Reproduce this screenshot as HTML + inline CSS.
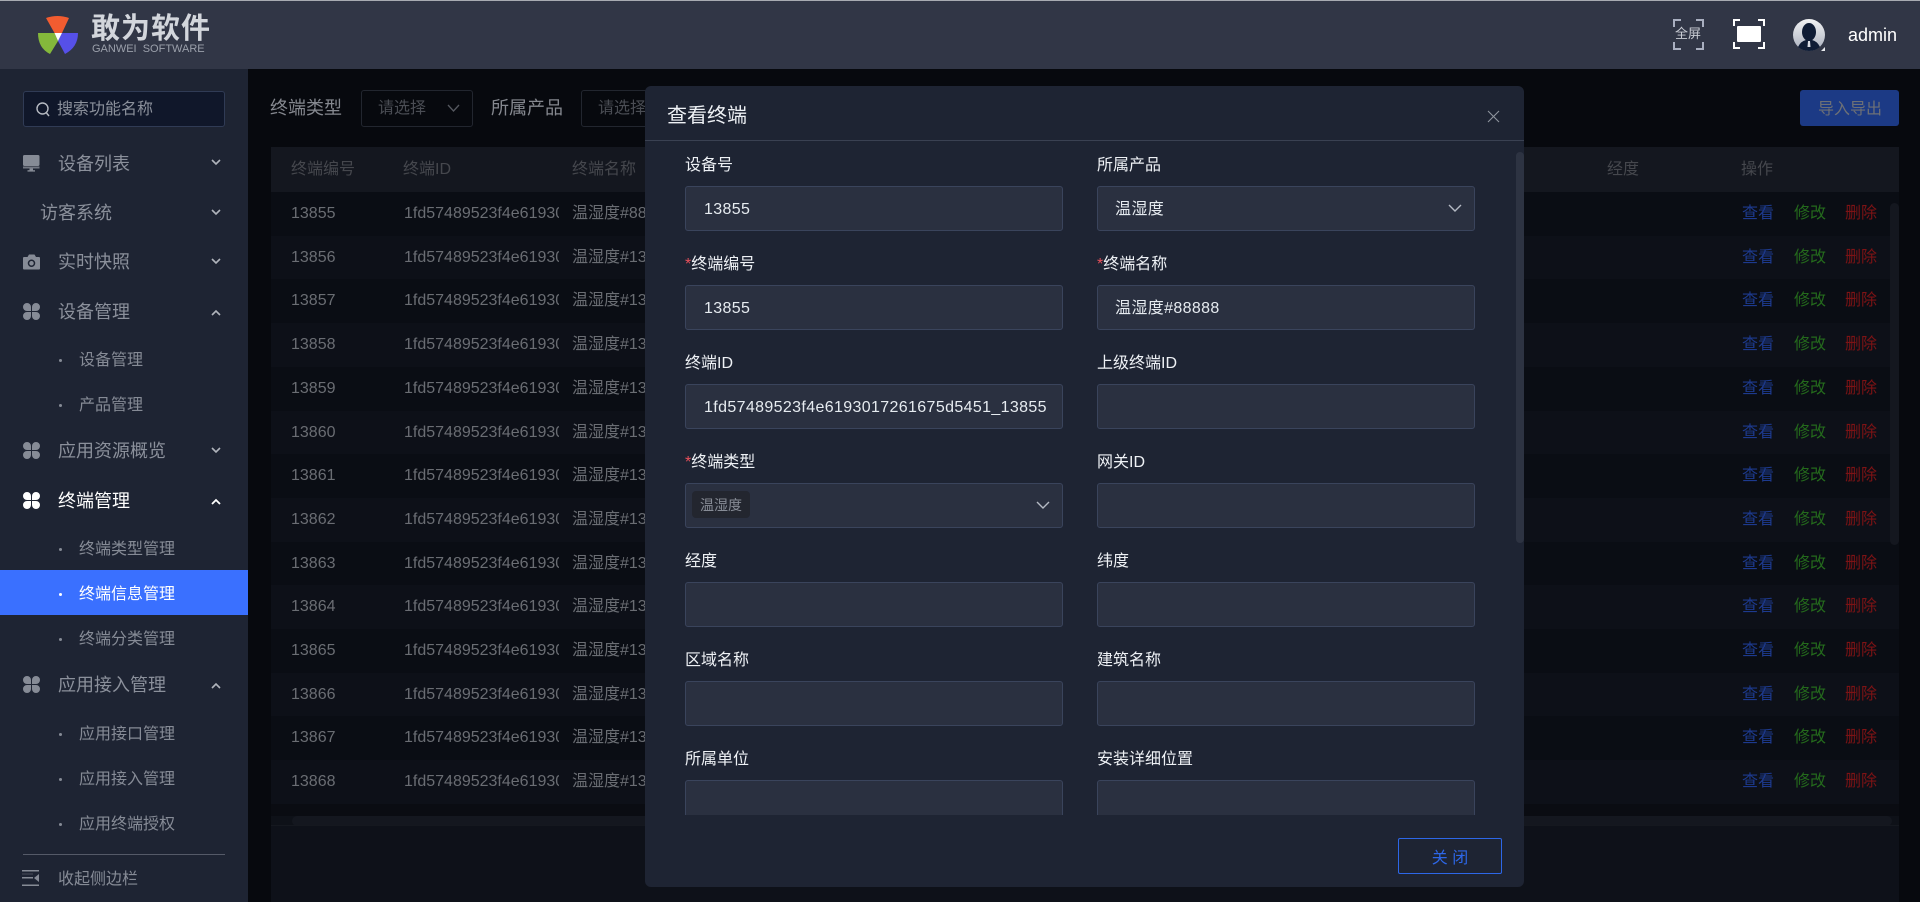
<!DOCTYPE html>
<html lang="zh-CN">
<head>
<meta charset="utf-8">
<title>查看终端</title>
<style>
html,body{margin:0;padding:0;background:#07090e;}
body{width:1920px;height:902px;position:relative;overflow:hidden;font-family:"Liberation Sans","Noto Sans CJK SC",sans-serif;font-size:16px;}
div,span,svg{position:absolute;box-sizing:border-box;}
.t{white-space:nowrap;line-height:24px;height:24px;}
.m{left:58px;font-size:18px;color:#8b909b;}
.s{left:79px;font-size:16px;color:#868b96;}
.d{left:59px;width:3px;height:3px;border-radius:50%;background:#868b96;}
.c{left:211px;}
.row{left:271px;width:1628px;height:44px;}
.row span{top:10px;white-space:nowrap;line-height:24px;color:#6a6d73;}
.a{left:20px}.b{left:133px;width:155px;overflow:hidden}.n{left:301px}
.v{left:1471px;color:#1d3a8e!important}.x{left:1523px;color:#246a1c!important}.z{left:1574px;color:#7d1315!important}
.o{background:#0a0d14}.e{background:#0d1018}
.l{font-size:16px;color:#eef1f5;white-space:nowrap;line-height:24px;height:24px;}
.l i{font-style:normal;color:#e8505b;}
.i{width:378px;height:45px;background:#2a3040;border:1px solid #3a445c;border-radius:3px;color:#e6ebf0;font-size:16px;line-height:45px;padding-left:18px;white-space:nowrap;overflow:hidden;letter-spacing:.36px;}
.c1{left:40px}.c2{left:452px}.i.c2{padding-left:17px}
</style>
</head>
<body>
<!-- header -->
<div style="left:0;top:0;width:1920px;height:69px;background:#313646;"></div>
<div style="left:0;top:0;width:1920px;height:1px;background:#a8abb2;"></div>
<svg style="left:36px;top:14px" width="44" height="42" viewBox="36 14 44 42">
<path d="M46 18Q57.500 14 69 18L62 33H54.500Z" fill="#f25c30"/>
<path d="M38 33H54.500L58 41L50 54Q38 48 38 33Z" fill="#84b83b"/>
<path d="M78 33H62L58 41L65 54Q78 47 78 33Z" fill="#5650e8"/>
<path d="M54.500 33H62L58 41Z" fill="#fff"/>
</svg>
<div class="t" style="left:91px;top:11px;font-size:29px;line-height:36px;height:36px;font-weight:700;color:#d3d6dc;letter-spacing:1px;">敢为软件</div>
<div class="t" style="left:92px;top:42px;font-size:11px;line-height:14px;height:14px;color:#9ba0ab;white-space:pre;">GANWEI  SOFTWARE</div>

<svg style="left:1673px;top:19px" width="31" height="31" viewBox="0 0 31 31" fill="none" stroke="#a9afc0" stroke-width="2"><path d="M1 8V1H8M23 1H30V8M1 23V30H8M23 30H30V23"/></svg>
<div class="t" style="left:1675px;top:22px;font-size:13px;color:#c9ccd4;">全屏</div>
<svg style="left:1733px;top:19px" width="32" height="30" viewBox="0 0 32 30" fill="none" stroke="#fff" stroke-width="2"><path d="M1 7V1H7M25 1H31V7M1 23V29H7M25 29H31V23"/><rect x="4" y="7" width="24" height="16" rx="1" fill="#fff" stroke="none"/></svg>
<svg style="left:1793px;top:19px" width="32" height="33" viewBox="0 0 32 33">
<defs><linearGradient id="av" x1="0" y1="0" x2="0" y2="1"><stop offset="0" stop-color="#f1f2f4"/><stop offset="1" stop-color="#a9afbd"/></linearGradient></defs>
<circle cx="16" cy="16" r="16" fill="url(#av)"/>
<ellipse cx="16" cy="13" rx="7" ry="9" fill="#0f1c35"/>
<path d="M5 28Q8 22 13 21H19Q24 22 27 28Q22 32 16 32Q10 32 5 28Z" fill="#0f1c35"/>
<path d="M15 22H17L17.500 28H14.500Z" fill="#d8dbe2"/>
<path d="M28 32L32 28V32Z" fill="#e8eaee"/>
</svg>
<div class="t" style="left:1848px;top:23px;font-size:18px;color:#fff;">admin</div>

<!-- sidebar -->
<div style="left:0;top:69px;width:248px;height:833px;background:#1e2433;"></div>
<div style="left:23px;top:91px;width:202px;height:36px;background:#10172a;border:1px solid #303b55;border-radius:3px;"></div>
<svg style="left:35px;top:101px" width="16" height="17" viewBox="0 0 16 17" fill="none" stroke="#b6bac2" stroke-width="1.400"><circle cx="7.500" cy="7.500" r="5.500"/><path d="M11.500 12L14 15"/></svg>
<div class="t" style="left:57px;top:98px;font-size:16px;color:#8b909b;">搜索功能名称</div>

<svg style="left:23px;top:155px" width="17" height="17" viewBox="0 0 17 17" fill="#868b96"><rect x="0" y="0" width="16.500" height="11" rx="1.500"/><rect x="0" y="11.500" width="16.500" height="2" opacity=".8"/><rect x="6.500" y="13.500" width="3.500" height="2"/><rect x="4.500" y="15.200" width="7.500" height="1.400"/></svg>
<div class="t m" style="top:152px;">设备列表</div>
<div class="t m" style="top:201px;left:40px;">访客系统</div>
<svg style="left:23px;top:254px" width="17" height="16" viewBox="0 0 17 16"><path fill="#868b96" fill-rule="evenodd" d="M1 3H4.500L6 .5H11.500L13 3H16A1 1 0 0 1 17 4V14.500A1 1 0 0 1 16 15.500H1A1 1 0 0 1 0 14.500V4A1 1 0 0 1 1 3ZM8.500 5.500A3.700 3.700 0 1 0 8.500 13A3.700 3.700 0 0 0 8.500 5.500ZM8.500 7A2.200 2.200 0 1 1 8.500 11.500A2.200 2.200 0 0 1 8.500 7Z"/></svg>
<div class="t m" style="top:250px;">实时快照</div>
<svg style="left:23px;top:303px" width="17" height="17" viewBox="0 0 17 17" fill="#868b96"><path d="M8 8H4A4 4 0 0 1 4 0A4 4 0 0 1 8 4ZM9 8V4A4 4 0 0 1 13 0A4 4 0 0 1 13 8ZM8 9V13A4 4 0 0 1 4 17A4 4 0 0 1 4 9ZM9 9H13A4 4 0 0 1 13 17A4 4 0 0 1 9 13Z"/></svg>
<div class="t m" style="top:300px;">设备管理</div>
<div class="d" style="top:359px;"></div><div class="t s" style="top:349px;">设备管理</div>
<div class="d" style="top:404px;"></div><div class="t s" style="top:394px;">产品管理</div>
<svg style="left:23px;top:442px" width="17" height="17" viewBox="0 0 17 17" fill="#868b96"><path d="M8 8H4A4 4 0 0 1 4 0A4 4 0 0 1 8 4ZM9 8V4A4 4 0 0 1 13 0A4 4 0 0 1 13 8ZM8 9V13A4 4 0 0 1 4 17A4 4 0 0 1 4 9ZM9 9H13A4 4 0 0 1 13 17A4 4 0 0 1 9 13Z"/></svg>
<div class="t m" style="top:439px;">应用资源概览</div>
<svg style="left:23px;top:492px" width="17" height="17" viewBox="0 0 17 17" fill="#fff"><path d="M8 8H4A4 4 0 0 1 4 0A4 4 0 0 1 8 4ZM9 8V4A4 4 0 0 1 13 0A4 4 0 0 1 13 8ZM8 9V13A4 4 0 0 1 4 17A4 4 0 0 1 4 9ZM9 9H13A4 4 0 0 1 13 17A4 4 0 0 1 9 13Z"/></svg>
<div class="t m" style="top:489px;color:#fff;">终端管理</div>
<div class="d" style="top:548px;"></div><div class="t s" style="top:538px;">终端类型管理</div>
<div style="left:0;top:570px;width:248px;height:45px;background:#3a70ff;"></div>
<div class="d" style="top:593px;background:#fff;"></div><div class="t s" style="top:583px;color:#fff;">终端信息管理</div>
<div class="d" style="top:638px;"></div><div class="t s" style="top:628px;">终端分类管理</div>
<svg style="left:23px;top:676px" width="17" height="17" viewBox="0 0 17 17" fill="#868b96"><path d="M8 8H4A4 4 0 0 1 4 0A4 4 0 0 1 8 4ZM9 8V4A4 4 0 0 1 13 0A4 4 0 0 1 13 8ZM8 9V13A4 4 0 0 1 4 17A4 4 0 0 1 4 9ZM9 9H13A4 4 0 0 1 13 17A4 4 0 0 1 9 13Z"/></svg>
<div class="t m" style="top:673px;">应用接入管理</div>
<div class="d" style="top:733px;"></div><div class="t s" style="top:723px;">应用接口管理</div>
<div class="d" style="top:778px;"></div><div class="t s" style="top:768px;">应用接入管理</div>
<div class="d" style="top:823px;"></div><div class="t s" style="top:813px;">应用终端授权</div>
<div style="left:23px;top:854px;width:202px;height:1px;background:#555a68;"></div>
<svg style="left:22px;top:870px" width="18" height="17" viewBox="0 0 18 17"><g fill="#868b96"><rect x="0" y="0" width="17" height="1.500"/><rect x="0" y="7" width="11" height="1.500"/><rect x="0" y="14.500" width="17" height="1.500"/><path d="M17 4V12L12 8Z"/></g><rect x="0" y="3.500" width="11" height="1" fill="#868b96" opacity=".4"/></svg>
<div class="t" style="left:58px;top:868px;font-size:16px;color:#868b96;">收起侧边栏</div>

<svg style="left:211px;top:159px" width="10" height="7" viewBox="0 0 10 7" fill="none" stroke="#b0b4bc" stroke-width="1.600"><path d="M1 1L5 5L9 1"/></svg>
<svg style="left:211px;top:209px" width="10" height="7" viewBox="0 0 10 7" fill="none" stroke="#b0b4bc" stroke-width="1.600"><path d="M1 1L5 5L9 1"/></svg>
<svg style="left:211px;top:258px" width="10" height="7" viewBox="0 0 10 7" fill="none" stroke="#b0b4bc" stroke-width="1.600"><path d="M1 1L5 5L9 1"/></svg>
<svg style="left:211px;top:309px" width="10" height="7" viewBox="0 0 10 7" fill="none" stroke="#b0b4bc" stroke-width="1.600"><path d="M1 6L5 2L9 6"/></svg>
<svg style="left:211px;top:447px" width="10" height="7" viewBox="0 0 10 7" fill="none" stroke="#b0b4bc" stroke-width="1.600"><path d="M1 1L5 5L9 1"/></svg>
<svg style="left:211px;top:498px" width="10" height="7" viewBox="0 0 10 7" fill="none" stroke="#fff" stroke-width="1.800"><path d="M1 6L5 2L9 6"/></svg>
<svg style="left:211px;top:682px" width="10" height="7" viewBox="0 0 10 7" fill="none" stroke="#b0b4bc" stroke-width="1.600"><path d="M1 6L5 2L9 6"/></svg>

<!-- main -->
<div style="left:271px;top:826px;width:1628px;height:76px;background:#0e1119;"></div>
<div class="t" style="left:270px;top:96px;font-size:18px;color:#85888f;">终端类型</div>
<div style="left:361px;top:90px;width:112px;height:37px;border:1px solid #22262f;border-radius:3px;"></div>
<div class="t" style="left:378px;top:97px;font-size:16px;color:#4a4d54;">请选择</div>
<svg style="left:447px;top:104px" width="13" height="9" viewBox="0 0 13 9" fill="none" stroke="#55585f" stroke-width="1.300"><path d="M1 1L6.500 7L12 1"/></svg>
<div class="t" style="left:491px;top:96px;font-size:18px;color:#85888f;">所属产品</div>
<div style="left:581px;top:90px;width:80px;height:37px;border:1px solid #22262f;border-radius:3px;"></div>
<div class="t" style="left:598px;top:97px;font-size:16px;color:#4a4d54;">请选择</div>
<div style="left:1800px;top:90px;width:99px;height:36px;background:#1c3a85;border-radius:3px;"></div>
<div class="t" style="left:1818px;top:98px;font-size:16px;color:#6d7076;white-space:nowrap;">导入导出</div>

<div style="left:271px;top:147px;width:1628px;height:45px;background:#14171f;"></div>
<div class="t" style="left:291px;top:158px;color:#45474d;">终端编号</div>
<div class="t" style="left:403px;top:158px;color:#45474d;">终端ID</div>
<div class="t" style="left:572px;top:158px;color:#45474d;">终端名称</div>
<div class="t" style="left:1607px;top:158px;color:#45474d;">经度</div>
<div class="t" style="left:1741px;top:158px;color:#45474d;">操作</div>

<div class="row o" style="top:192px"><span class="a">13855</span><span class="b">1fd57489523f4e6193017261675d5451_13855</span><span class="n">温湿度#88888</span><span class="v">查看</span><span class="x">修改</span><span class="z">删除</span></div>
<div class="row e" style="top:235.700px"><span class="a">13856</span><span class="b">1fd57489523f4e6193017261675d5451_13856</span><span class="n">温湿度#13856</span><span class="v">查看</span><span class="x">修改</span><span class="z">删除</span></div>
<div class="row o" style="top:279.400px"><span class="a">13857</span><span class="b">1fd57489523f4e6193017261675d5451_13857</span><span class="n">温湿度#13857</span><span class="v">查看</span><span class="x">修改</span><span class="z">删除</span></div>
<div class="row e" style="top:323.100px"><span class="a">13858</span><span class="b">1fd57489523f4e6193017261675d5451_13858</span><span class="n">温湿度#13858</span><span class="v">查看</span><span class="x">修改</span><span class="z">删除</span></div>
<div class="row o" style="top:366.800px"><span class="a">13859</span><span class="b">1fd57489523f4e6193017261675d5451_13859</span><span class="n">温湿度#13859</span><span class="v">查看</span><span class="x">修改</span><span class="z">删除</span></div>
<div class="row e" style="top:410.500px"><span class="a">13860</span><span class="b">1fd57489523f4e6193017261675d5451_13860</span><span class="n">温湿度#13860</span><span class="v">查看</span><span class="x">修改</span><span class="z">删除</span></div>
<div class="row o" style="top:454.200px"><span class="a">13861</span><span class="b">1fd57489523f4e6193017261675d5451_13861</span><span class="n">温湿度#13861</span><span class="v">查看</span><span class="x">修改</span><span class="z">删除</span></div>
<div class="row e" style="top:497.900px"><span class="a">13862</span><span class="b">1fd57489523f4e6193017261675d5451_13862</span><span class="n">温湿度#13862</span><span class="v">查看</span><span class="x">修改</span><span class="z">删除</span></div>
<div class="row o" style="top:541.600px"><span class="a">13863</span><span class="b">1fd57489523f4e6193017261675d5451_13863</span><span class="n">温湿度#13863</span><span class="v">查看</span><span class="x">修改</span><span class="z">删除</span></div>
<div class="row e" style="top:585.300px"><span class="a">13864</span><span class="b">1fd57489523f4e6193017261675d5451_13864</span><span class="n">温湿度#13864</span><span class="v">查看</span><span class="x">修改</span><span class="z">删除</span></div>
<div class="row o" style="top:629px"><span class="a">13865</span><span class="b">1fd57489523f4e6193017261675d5451_13865</span><span class="n">温湿度#13865</span><span class="v">查看</span><span class="x">修改</span><span class="z">删除</span></div>
<div class="row e" style="top:672.700px"><span class="a">13866</span><span class="b">1fd57489523f4e6193017261675d5451_13866</span><span class="n">温湿度#13866</span><span class="v">查看</span><span class="x">修改</span><span class="z">删除</span></div>
<div class="row o" style="top:716.400px"><span class="a">13867</span><span class="b">1fd57489523f4e6193017261675d5451_13867</span><span class="n">温湿度#13867</span><span class="v">查看</span><span class="x">修改</span><span class="z">删除</span></div>
<div class="row e" style="top:760.100px"><span class="a">13868</span><span class="b">1fd57489523f4e6193017261675d5451_13868</span><span class="n">温湿度#13868</span><span class="v">查看</span><span class="x">修改</span><span class="z">删除</span></div>

<div style="left:271px;top:804px;width:1628px;height:22px;background:#0a0c12;"></div>
<div style="left:271px;top:816px;width:1628px;height:10px;background:#0e1118;"></div>
<div style="left:292px;top:816px;width:1600px;height:10px;background:#14171f;border-radius:5px;"></div>
<div style="left:271px;top:825px;width:1628px;height:1px;background:#15181f;"></div>
<div style="left:1890px;top:203px;width:9px;height:342px;background:#14171f;border-radius:5px;"></div>

<!-- modal -->
<div style="left:645px;top:86px;width:879px;height:801px;background:#1e2433;border-radius:6px;overflow:hidden;">
  <div style="left:0;top:54px;width:879px;height:1px;background:#3a4152;"></div>
  <div class="t" style="left:22px;top:18px;font-size:20px;color:#eef1f5;">查看终端</div>
  <svg style="left:842px;top:24px" width="13" height="13" viewBox="0 0 13 13" stroke="#8f949e" stroke-width="1.100" fill="none"><path d="M1 1L12 12M12 1L1 12"/></svg>
  <div style="left:871px;top:66px;width:8px;height:391px;background:#2d3342;border-radius:4px;"></div>
  <div style="left:0;top:55px;width:871px;height:674px;overflow:hidden;">
    <div class="l c1" style="top:13px;">设备号</div>
    <div class="l c2" style="top:13px;">所属产品</div>
    <div class="i c1" style="top:45px;">13855</div>
    <div class="i c2" style="top:45px;">温湿度<svg style="left:350px;top:17px" width="14" height="9" viewBox="0 0 14 9" fill="none" stroke="#b5bac4" stroke-width="1.400"><path d="M1 1L7 7L13 1"/></svg></div>

    <div class="l c1" style="top:112px;"><i>*</i>终端编号</div>
    <div class="l c2" style="top:112px;"><i>*</i>终端名称</div>
    <div class="i c1" style="top:144px;">13855</div>
    <div class="i c2" style="top:144px;">温湿度#88888</div>

    <div class="l c1" style="top:211px;">终端ID</div>
    <div class="l c2" style="top:211px;">上级终端ID</div>
    <div class="i c1" style="top:243px;">1fd57489523f4e6193017261675d5451_13855</div>
    <div class="i c2" style="top:243px;"></div>

    <div class="l c1" style="top:310px;"><i>*</i>终端类型</div>
    <div class="l c2" style="top:310px;">网关ID</div>
    <div class="i c1" style="top:342px;"><div style="left:6px;top:7px;width:58px;height:27px;background:#23262f;border-radius:4px;color:#878c96;font-size:14px;line-height:29px;text-align:center;letter-spacing:0;">温湿度</div><svg style="left:350px;top:17px" width="14" height="9" viewBox="0 0 14 9" fill="none" stroke="#b5bac4" stroke-width="1.400"><path d="M1 1L7 7L13 1"/></svg></div>
    <div class="i c2" style="top:342px;"></div>

    <div class="l c1" style="top:409px;">经度</div>
    <div class="l c2" style="top:409px;">纬度</div>
    <div class="i c1" style="top:441px;"></div>
    <div class="i c2" style="top:441px;"></div>

    <div class="l c1" style="top:508px;">区域名称</div>
    <div class="l c2" style="top:508px;">建筑名称</div>
    <div class="i c1" style="top:540px;"></div>
    <div class="i c2" style="top:540px;"></div>

    <div class="l c1" style="top:607px;">所属单位</div>
    <div class="l c2" style="top:607px;">安装详细位置</div>
    <div class="i c1" style="top:639px;"></div>
    <div class="i c2" style="top:639px;"></div>
  </div>
  <div style="left:753px;top:752px;width:104px;height:36px;border:1px solid #2d67e8;border-radius:2px;color:#2d67e8;font-size:16px;line-height:40px;text-align:center;white-space:pre;">关 闭</div>
</div>
</body>
</html>
